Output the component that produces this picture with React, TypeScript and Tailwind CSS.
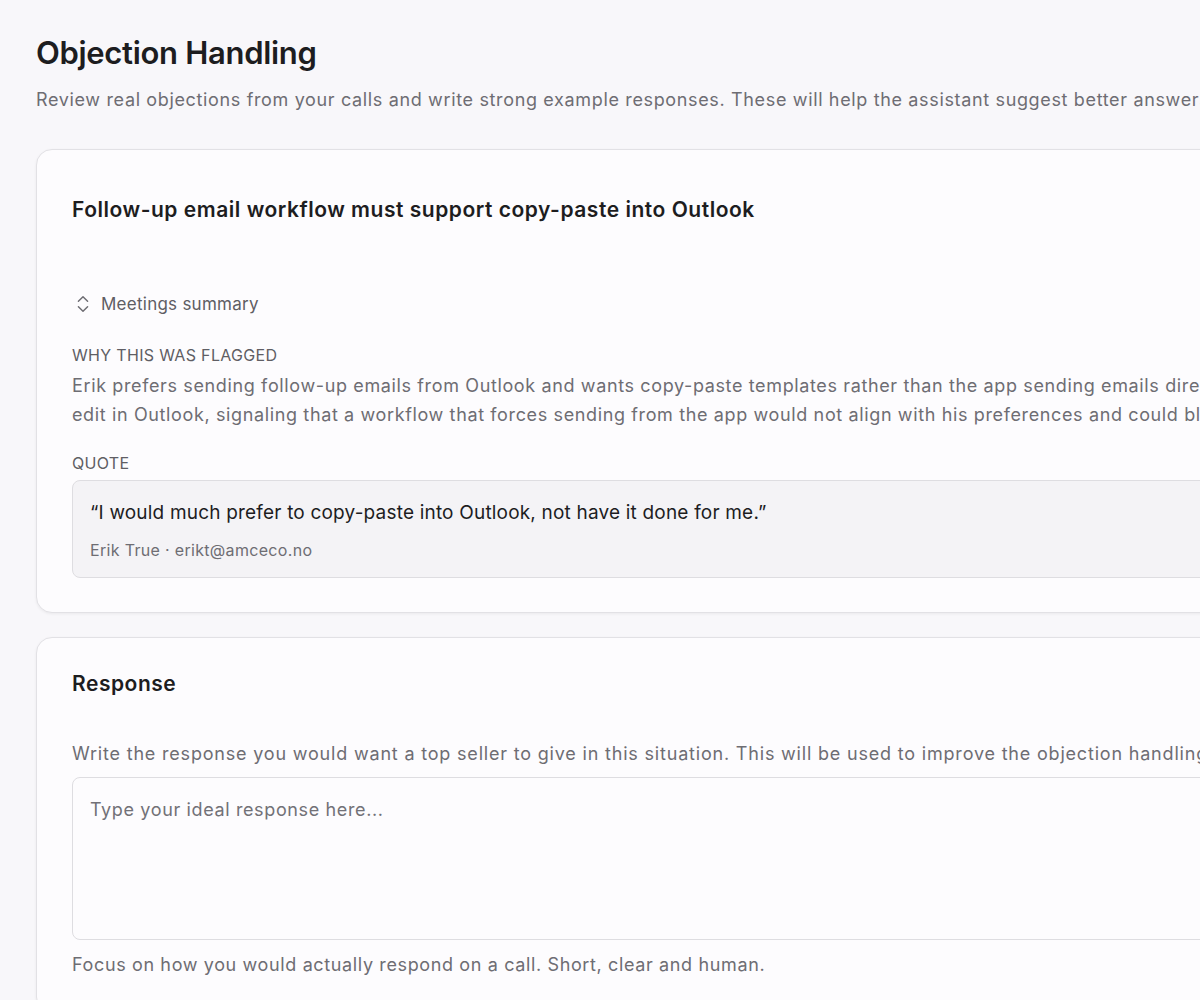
import { ChevronsUpDown } from 'lucide-react';

export default function App() {
  return (
    <div className="min-h-screen w-full overflow-hidden bg-[#f8f7fa] font-['Inter',sans-serif] text-[#1d1d1f]">
      <div className="w-[1500px] pl-9 pt-[33px]">
        <h1 className="text-[31px] font-semibold leading-[40px] tracking-[-0.01em]">Objection Handling</h1>
        <p className="mt-[15px] text-[18px] leading-6 tracking-[0.036em] text-[#6e6d73]">
          Review real objections from your calls and write strong example responses. These will help the assistant suggest better answers.
        </p>

        <div className="mt-[37px] rounded-2xl border border-[#e2e1e5] bg-[#fdfcfe] px-[35px] pb-[34px] pt-[46px] shadow-[0_1px_3px_rgba(0,0,0,0.06)]">
          <h2 className="text-[21px] font-semibold leading-7 tracking-[0.025em]">
            Follow-up email workflow must support copy-paste into Outlook
          </h2>

          <button className="mt-[68px] flex items-center gap-[7px] text-[17px] leading-6 tracking-[0.015em] text-[#5f5e64]">
            <ChevronsUpDown size={22} strokeWidth={1.6} className="text-[#6e6d73]" />
            Meetings summary
          </button>

          <div className="mt-[27px] text-[16px] uppercase leading-6 tracking-[0.02em] text-[#5f5e64]">Why this was flagged</div>
          <p className="mt-[4px] whitespace-nowrap text-[18px] leading-[29px] tracking-[0.035em] text-[#6e6d73]">
            Erik prefers sending follow-up emails from Outlook and wants copy-paste templates rather than the app sending emails directly, so he can review and
            <br />
            edit in Outlook, signaling that a workflow that forces sending from the app would not align with his preferences and could block adoption.
          </p>

          <div className="mt-[22px] text-[16px] uppercase leading-6 tracking-[0.02em] text-[#5f5e64]">Quote</div>
          <div className="mt-[5px] rounded-lg border border-[#dedde1] bg-[#f4f3f6] px-[17px] pb-[15px] pt-[18px]">
            <p className="text-[19px] leading-7 tracking-[0.01em] text-[#1d1d1f]">“I would much prefer to copy-paste into Outlook, not have it done for me.”</p>
            <p className="mt-[11px] text-[16px] leading-6 tracking-[0.02em] text-[#6e6d73]">Erik True · erikt@amceco.no</p>
          </div>
        </div>

        <div className="mt-6 rounded-2xl border border-[#e2e1e5] bg-[#fdfcfe] px-[35px] pb-[35px] pt-[32px] shadow-[0_1px_3px_rgba(0,0,0,0.06)]">
          <h2 className="text-[21px] font-semibold leading-7 tracking-[0.025em]">Response</h2>

          <p className="mt-[42px] text-[18px] leading-7 tracking-[0.045em] text-[#6e6d73]">
            Write the response you would want a top seller to give in this situation. This will be used to improve the objection handling suggestions.
          </p>
          <textarea
            placeholder="Type your ideal response here..."
            className="mt-[9px] block h-[163px] w-full resize-none rounded-lg border border-[#dedde1] bg-[#fdfcfe] px-[17px] py-[20px] text-[18px] leading-6 tracking-[0.035em] text-[#1d1d1f] outline-none placeholder:text-[#727177]"
          />
          <p className="mt-[13px] text-[18px] leading-6 tracking-[0.035em] text-[#6e6d73]">
            Focus on how you would actually respond on a call. Short, clear and human.
          </p>
        </div>
      </div>
    </div>
  );
}
